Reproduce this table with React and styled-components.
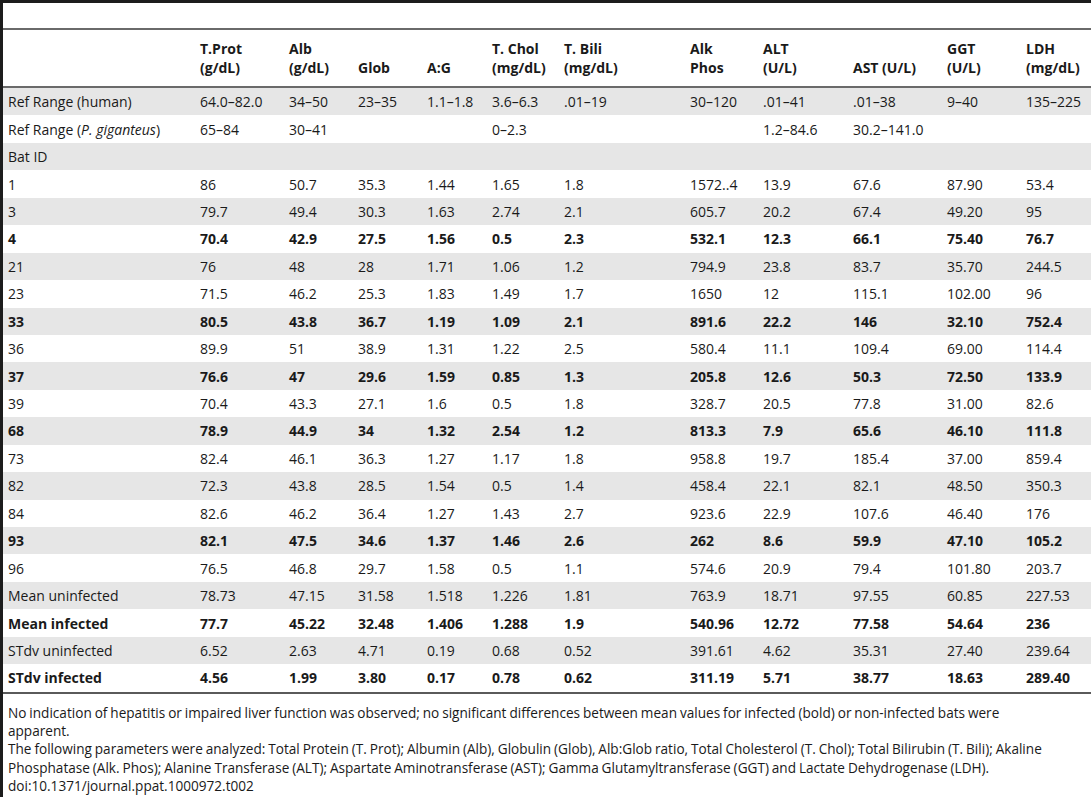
import React from "react";
import styled, { createGlobalStyle } from "styled-components";

const GlobalStyle = createGlobalStyle`
  body {
    margin: 0;
    background: #fff;
    font-family: "Open Sans", "Liberation Sans", sans-serif;
    color: #1a1a1a;
  }
`;

const Frame = styled.div`
  border-top: 3px solid #1c1c1c;
  border-left: 3px solid #1c1c1c;
  min-height: 797px;
  box-sizing: border-box;
`;

const Caption = styled.div`
  height: 25px;
`;

const Table = styled.div`
  border-top: 2px solid #6a6a6a;
  border-bottom: 2px solid #5a5a5a;
`;

const cols = "192px 89px 69px 69px 65px 72px 126px 73px 90px 94px 79px 1fr";

const HeadRow = styled.div`
  display: grid;
  grid-template-columns: ${cols};
  padding-left: 5px;
  height: 55px;
  align-items: end;
  padding-bottom: 1px;
  border-bottom: 2px solid #6a6a6a;
`;

const HeadCell = styled.div`
  font-weight: 700;
  font-size: 14px;
  line-height: 19px;
  padding-bottom: 8px;
  white-space: nowrap;
`;

const Row = styled.div`
  display: grid;
  grid-template-columns: ${cols};
  padding-left: 5px;
  height: 27.45px;
  align-items: center;
  background: ${({ $shade }) => ($shade ? "#e6e6e6" : "#fff")};
  font-weight: ${({ $bold }) => ($bold ? 700 : 400)};
`;

const Cell = styled.div`
  font-size: 14px;
  white-space: nowrap;
`;

const Notes = styled.div`
  padding: 10px 0 0 5px;
  font-size: 13.6px;
  line-height: 18.4px;
  word-spacing: -0.6px;
`;

const heads = [
  "",
  ["T.Prot", "(g/dL)"],
  ["Alb", "(g/dL)"],
  ["Glob"],
  ["A:G"],
  ["T. Chol", "(mg/dL)"],
  ["T. Bili", "(mg/dL)"],
  ["Alk", "Phos"],
  ["ALT", "(U/L)"],
  ["AST (U/L)"],
  ["GGT", "(U/L)"],
  ["LDH", "(mg/dL)"],
];

const rows = [
  [["Ref Range (human)", "64.0–82.0", "34–50", "23–35", "1.1–1.8", "3.6–6.3", ".01–19", "30–120", ".01–41", ".01–38", "9–40", "135–225"]],
  [["Ref Range (P. giganteus)", "65–84", "30–41", "", "", "0–2.3", "", "", "1.2–84.6", "30.2–141.0", "", ""]],
  [["Bat ID", "", "", "", "", "", "", "", "", "", "", ""]],
  [["1", "86", "50.7", "35.3", "1.44", "1.65", "1.8", "1572..4", "13.9", "67.6", "87.90", "53.4"]],
  [["3", "79.7", "49.4", "30.3", "1.63", "2.74", "2.1", "605.7", "20.2", "67.4", "49.20", "95"]],
  [["4", "70.4", "42.9", "27.5", "1.56", "0.5", "2.3", "532.1", "12.3", "66.1", "75.40", "76.7"], true],
  [["21", "76", "48", "28", "1.71", "1.06", "1.2", "794.9", "23.8", "83.7", "35.70", "244.5"]],
  [["23", "71.5", "46.2", "25.3", "1.83", "1.49", "1.7", "1650", "12", "115.1", "102.00", "96"]],
  [["33", "80.5", "43.8", "36.7", "1.19", "1.09", "2.1", "891.6", "22.2", "146", "32.10", "752.4"], true],
  [["36", "89.9", "51", "38.9", "1.31", "1.22", "2.5", "580.4", "11.1", "109.4", "69.00", "114.4"]],
  [["37", "76.6", "47", "29.6", "1.59", "0.85", "1.3", "205.8", "12.6", "50.3", "72.50", "133.9"], true],
  [["39", "70.4", "43.3", "27.1", "1.6", "0.5", "1.8", "328.7", "20.5", "77.8", "31.00", "82.6"]],
  [["68", "78.9", "44.9", "34", "1.32", "2.54", "1.2", "813.3", "7.9", "65.6", "46.10", "111.8"], true],
  [["73", "82.4", "46.1", "36.3", "1.27", "1.17", "1.8", "958.8", "19.7", "185.4", "37.00", "859.4"]],
  [["82", "72.3", "43.8", "28.5", "1.54", "0.5", "1.4", "458.4", "22.1", "82.1", "48.50", "350.3"]],
  [["84", "82.6", "46.2", "36.4", "1.27", "1.43", "2.7", "923.6", "22.9", "107.6", "46.40", "176"]],
  [["93", "82.1", "47.5", "34.6", "1.37", "1.46", "2.6", "262", "8.6", "59.9", "47.10", "105.2"], true],
  [["96", "76.5", "46.8", "29.7", "1.58", "0.5", "1.1", "574.6", "20.9", "79.4", "101.80", "203.7"]],
  [["Mean uninfected", "78.73", "47.15", "31.58", "1.518", "1.226", "1.81", "763.9", "18.71", "97.55", "60.85", "227.53"]],
  [["Mean infected", "77.7", "45.22", "32.48", "1.406", "1.288", "1.9", "540.96", "12.72", "77.58", "54.64", "236"], true],
  [["STdv uninfected", "6.52", "2.63", "4.71", "0.19", "0.68", "0.52", "391.61", "4.62", "35.31", "27.40", "239.64"]],
  [["STdv infected", "4.56", "1.99", "3.80", "0.17", "0.78", "0.62", "311.19", "5.71", "38.77", "18.63", "289.40"], true],
];

const First = ({ text }) =>
  text === "Ref Range (P. giganteus)" ? (
    <>
      Ref Range (<i>P. giganteus</i>)
    </>
  ) : (
    text
  );

export default function App() {
  return (
    <>
      <GlobalStyle />
      <Frame>
        <Caption />
        <Table>
          <HeadRow>
            {heads.map((h, i) => (
              <HeadCell key={i}>
                {h === "" ? null : h.map((l, j) => <div key={j}>{l}</div>)}
              </HeadCell>
            ))}
          </HeadRow>
          {rows.map(([cells, bold], r) => (
            <Row key={r} $shade={r % 2 === 0} $bold={bold}>
              {cells.map((c, i) => (
                <Cell key={i}>{i === 0 ? <First text={c} /> : c}</Cell>
              ))}
            </Row>
          ))}
        </Table>
        <Notes>
          <div>
            No indication of hepatitis or impaired liver function was observed; no significant differences between mean values for infected (bold) or non-infected bats were
            <br />
            apparent.
          </div>
          <div>
            The following parameters were analyzed: Total Protein (T. Prot); Albumin (Alb), Globulin (Glob), Alb:Glob ratio, Total Cholesterol (T. Chol); Total Bilirubin (T. Bili); Akaline Phosphatase (Alk. Phos); Alanine Transferase (ALT); Aspartate Aminotransferase (AST); Gamma Glutamyltransferase (GGT) and Lactate Dehydrogenase (LDH).
          </div>
          <div>doi:10.1371/journal.ppat.1000972.t002</div>
        </Notes>
      </Frame>
    </>
  );
}
